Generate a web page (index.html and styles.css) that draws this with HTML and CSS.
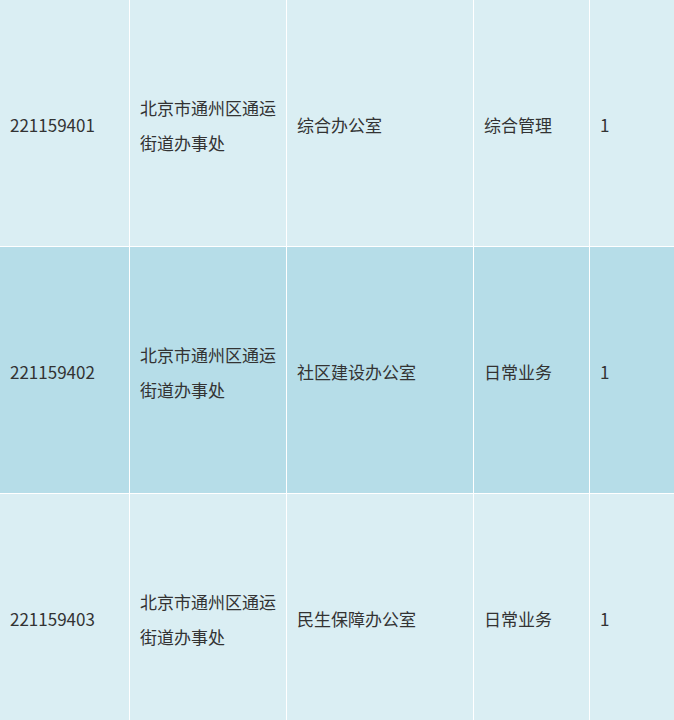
FILE: index.html
```html
<!DOCTYPE html>
<html lang="zh-CN">
<head>
<meta charset="utf-8">
<title>职位表</title>
<link rel="stylesheet" href="styles.css">
</head>
<body>
<table class="jobs">
  <colgroup>
    <col class="c1"><col class="c2"><col class="c3"><col class="c4"><col class="c5">
  </colgroup>
  <tbody>
    <tr class="row-light">
      <td>221159401</td>
      <td>北京市通州区通运街道办事处</td>
      <td>综合办公室</td>
      <td>综合管理</td>
      <td>1</td>
    </tr>
    <tr class="row-dark">
      <td>221159402</td>
      <td>北京市通州区通运街道办事处</td>
      <td>社区建设办公室</td>
      <td>日常业务</td>
      <td>1</td>
    </tr>
    <tr class="row-light">
      <td>221159403</td>
      <td>北京市通州区通运街道办事处</td>
      <td>民生保障办公室</td>
      <td>日常业务</td>
      <td>1</td>
    </tr>
  </tbody>
</table>
</body>
</html>
```
FILE: styles.css
```css
html, body {
  margin: 0;
  padding: 0;
  overflow: hidden;
  background: #daeef3;
}
.jobs {
  border-collapse: separate;
  border-spacing: 0;
  table-layout: fixed;
  width: 674px;
  font-family: "Noto Sans CJK SC", "Noto Sans", sans-serif;
  font-size: 17px;
  color: #333333;
}
.c1 { width: 130px; }
.c2 { width: 157px; }
.c3 { width: 187px; }
.c4 { width: 116px; }
.c5 { width: 84px; }
.jobs td {
  box-sizing: border-box;
  height: 247px;
  padding: 3px 10px 0;
  line-height: 35px;
  vertical-align: middle;
  border-right: 1px solid #ffffff;
  border-bottom: 1px solid #ffffff;
  word-break: break-all;
}
.jobs td:last-child { border-right: 0; }
.row-light td { background: #daeef3; }
.row-dark td { background: #b6dde8; }
```
